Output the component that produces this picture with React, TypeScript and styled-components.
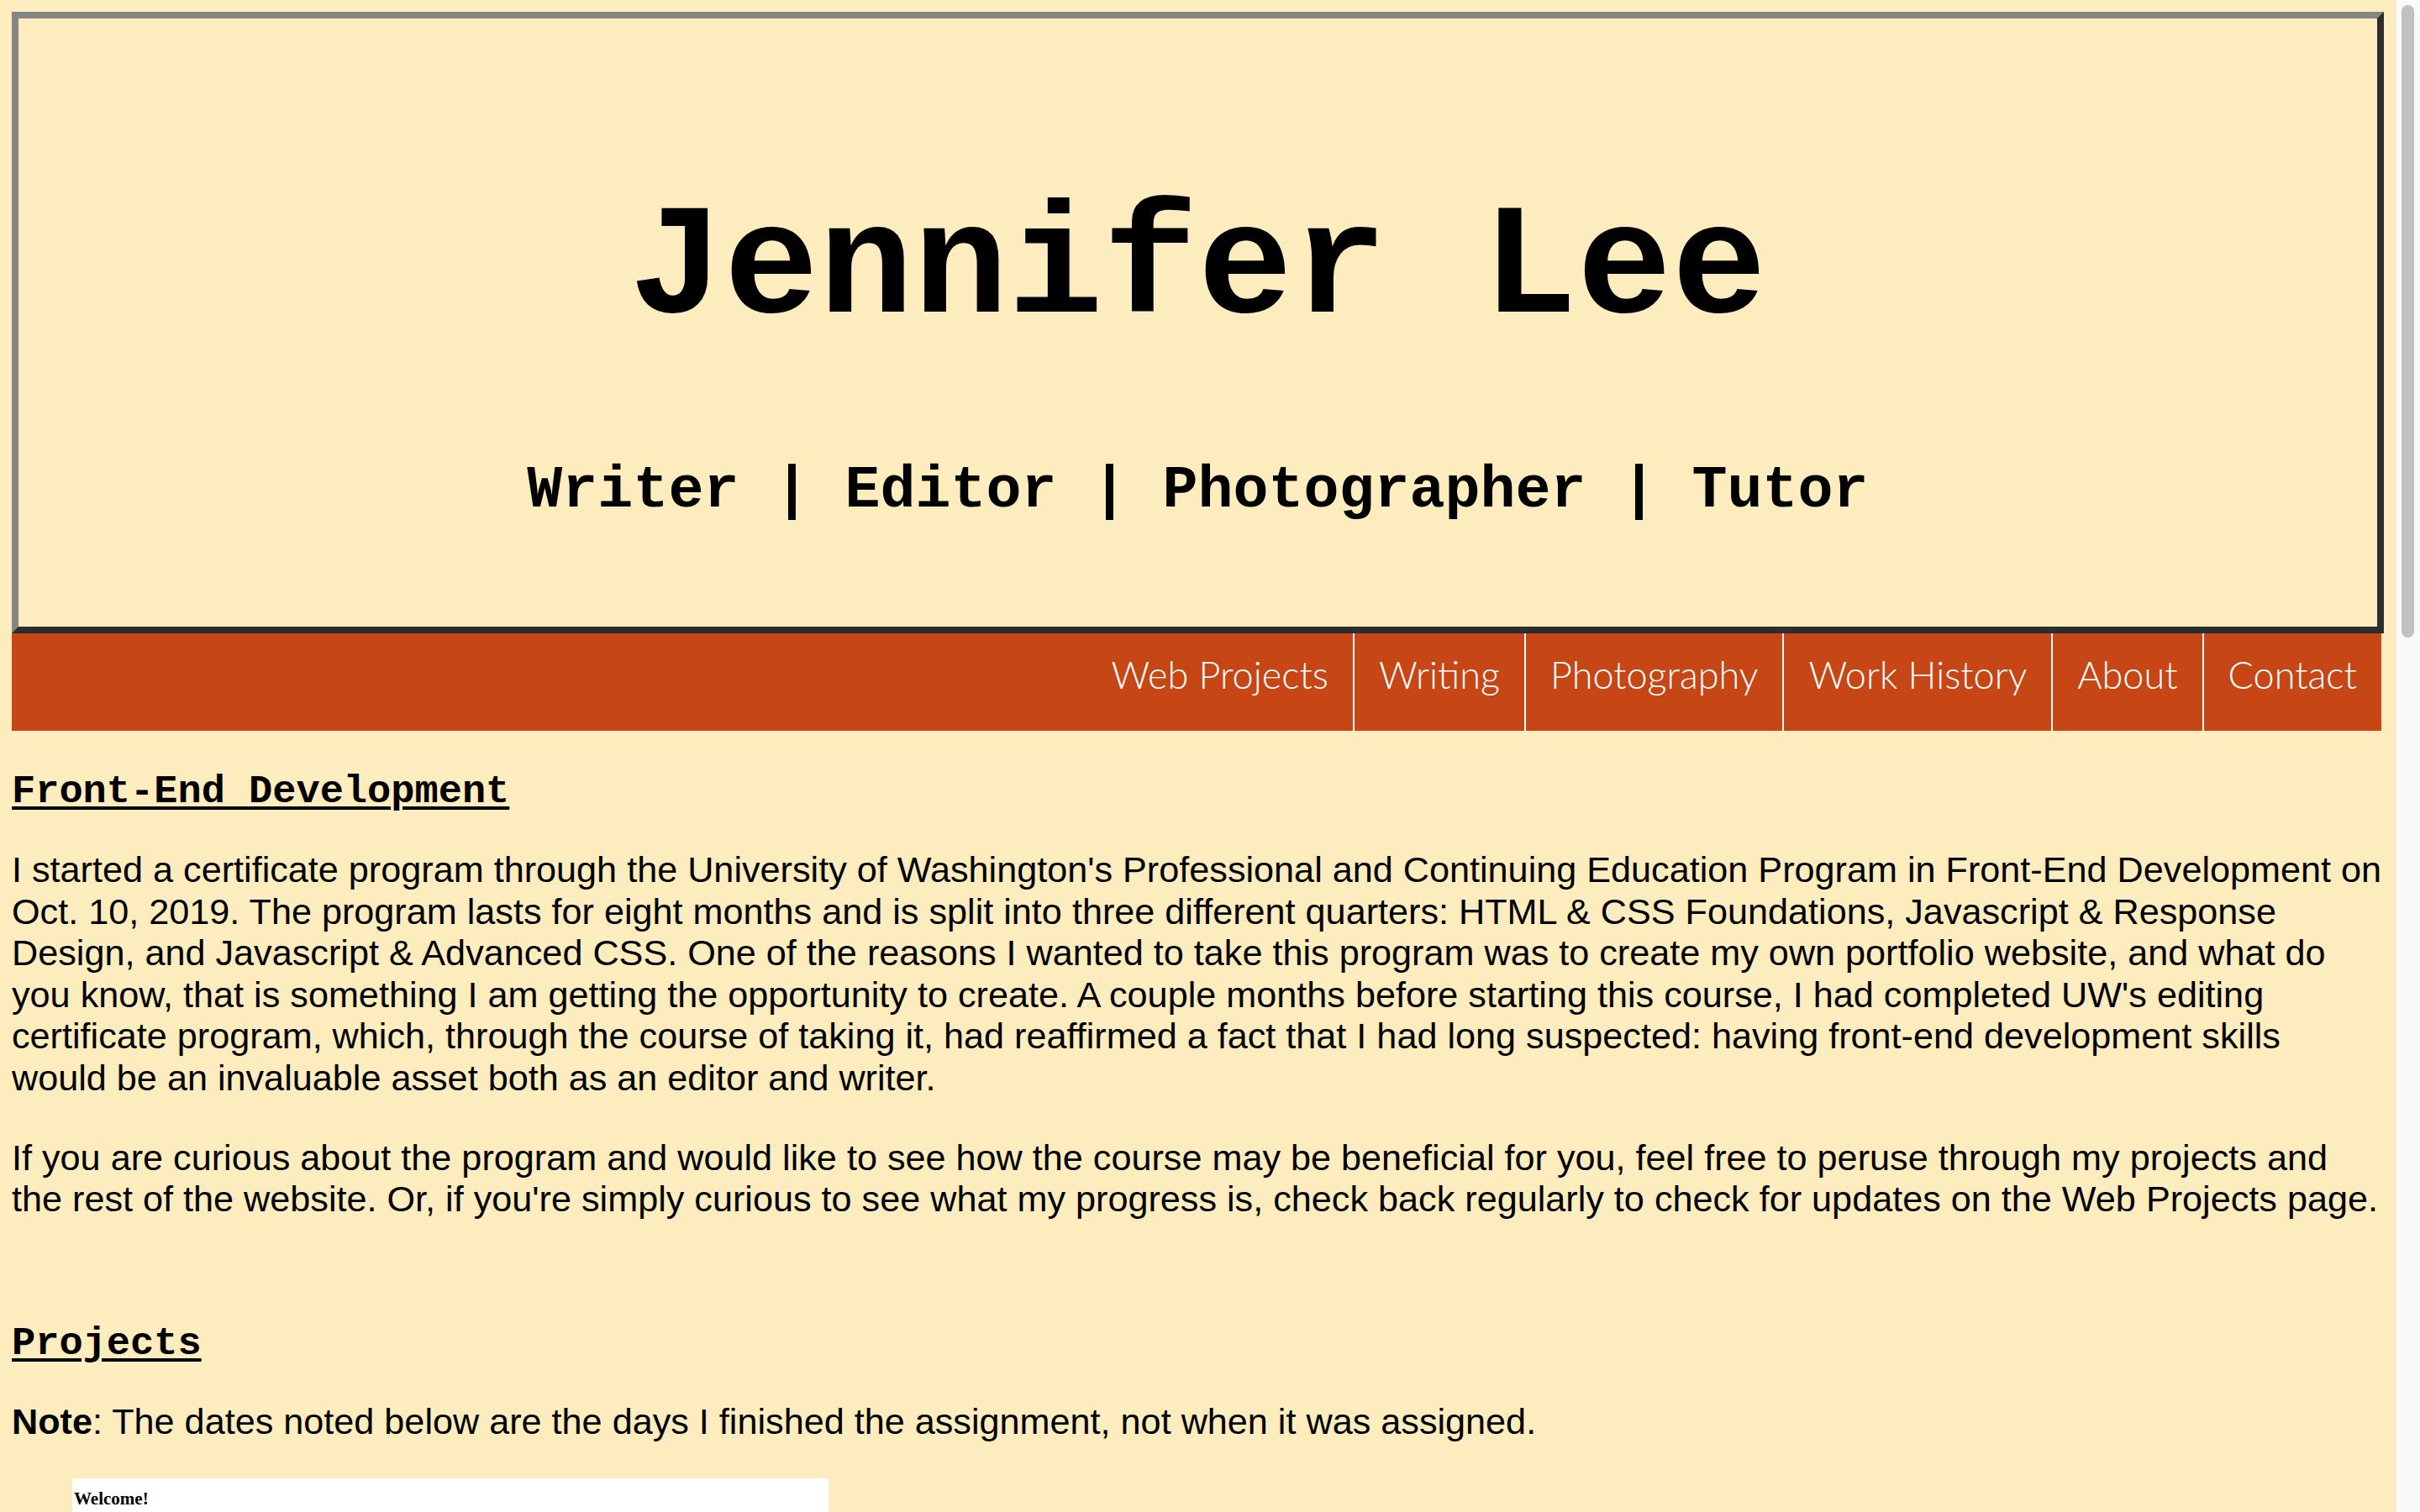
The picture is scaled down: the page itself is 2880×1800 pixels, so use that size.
import React from "react";
import styled, { createGlobalStyle } from "styled-components";

const cream = "#FDECBD";
const rust = "#C74616";

const GlobalStyle = createGlobalStyle`
  html, body {
    margin: 0;
    padding: 0;
    height: 100%;
    overflow: hidden;
    background: ${cream};
  }
  body {
    font-family: "Liberation Sans", Arial, sans-serif;
    color: #000;
  }
  * { box-sizing: border-box; }
`;

const Viewport = styled.div`
  display: flex;
  flex-direction: row;
  width: 100vw;
  height: 100vh;
  background: ${cream};
`;

const Page = styled.div`
  flex: 1;
  min-width: 0;
  height: 100%;
  overflow: hidden;
  padding: 14px 14px 0 14px;
`;

const ScrollTrack = styled.div`
  width: 29px;
  flex: none;
  height: 100%;
  background: #fafafa;
  border-left: 1px solid #e9e9e9;
  padding: 6px 0 0 6px;
`;

const ScrollThumb = styled.div`
  width: 15px;
  height: 753px;
  border-radius: 8px;
  background: #c1c1c1;
`;

const Header = styled.header`
  border-style: solid;
  border-width: 8px;
  border-color: #858585 #2d2d2d #2d2d2d #858585;
  padding: 205px 0 126px 0;
  display: flex;
  flex-direction: column;
  align-items: center;
  gap: 134px;
  text-align: center;
`;

const Title = styled.h1`
  margin: 0;
  font-family: "Liberation Mono", "Courier New", monospace;
  font-weight: 700;
  font-size: 188px;
  line-height: 188px;
  white-space: nowrap;
`;

const Subtitle = styled.h2`
  margin: 0;
  font-family: "Liberation Mono", "Courier New", monospace;
  font-weight: 700;
  font-size: 70px;
  line-height: 71px;
  white-space: pre;
`;

const Nav = styled.nav`
  display: flex;
  justify-content: flex-end;
  align-items: stretch;
  height: 116px;
  margin-right: 3px;
  background: ${rust};
`;

const NavItem = styled.a`
  display: flex;
  align-items: center;
  padding: 0 29px 18px 29px;
  color: #fff;
  text-decoration: none;
  font-family: Lato, "Open Sans", sans-serif;
  font-weight: 300;
  font-size: 45px;
  line-height: 1.2;
  white-space: nowrap;
  & + & {
    border-left: 2px solid #fff;
  }
`;

const Main = styled.main`
  display: flex;
  flex-direction: column;
  align-items: flex-start;
`;

const SectionHeading = styled.h2<{ $top: number }>`
  margin: ${(p) => p.$top}px 0 0 0;
  font-family: "Liberation Mono", "Courier New", monospace;
  font-weight: 700;
  font-size: 47px;
  line-height: 56px;
  text-decoration: underline;
  text-decoration-thickness: 4px;
  text-underline-offset: 5px;
`;

const Para = styled.p<{ $top: number }>`
  margin: ${(p) => p.$top}px 0 0 0;
  font-size: 43.2px;
  line-height: 49.6px;
`;

const ProjectFrame = styled.div`
  margin: 43px 0 0 72px;
  width: 900px;
  height: 600px;
  flex: none;
  background: #fff;
  padding: 12px 2px 0 2px;
`;

const FrameTitle = styled.h3`
  margin: 0;
  font-family: "Liberation Serif", "Times New Roman", serif;
  font-weight: 700;
  font-size: 21px;
  line-height: normal;
`;

const navLinks = ["Web Projects", "Writing", "Photography", "Work History", "About", "Contact"];

export default function App() {
  return (
    <>
      <GlobalStyle />
      <Viewport>
        <Page>
          <Header>
            <Title>Jennifer Lee</Title>
            <Subtitle>{"Writer | Editor | Photographer | Tutor"}</Subtitle>
          </Header>
          <Nav>
            {navLinks.map((l) => (
              <NavItem key={l} href="#">
                {l}
              </NavItem>
            ))}
          </Nav>
          <Main>
            <SectionHeading $top={45}>Front-End Development</SectionHeading>
            <Para $top={40}>
              I started a certificate program through the University of Washington's Professional and
              Continuing Education Program in Front-End Development on Oct. 10, 2019. The program lasts
              for eight months and is split into three different quarters: HTML &amp; CSS Foundations,
              Javascript &amp; Response Design, and Javascript &amp; Advanced CSS. One of the reasons I
              wanted to take this program was to create my own portfolio website, and what do you know,
              that is something I am getting the opportunity to create. A couple months before starting
              this course, I had completed UW's editing certificate program, which, through the course of
              taking it, had reaffirmed a fact that I had long suspected: having front-end development
              skills would be an invaluable asset both as an editor and writer.
            </Para>
            <Para $top={45}>
              If you are curious about the program and would like to see how the course may be beneficial
              for you, feel free to peruse through my projects and the rest of the website. Or, if you're
              simply curious to see what my progress is, check back regularly to check for updates on the
              Web Projects page.
            </Para>
            <SectionHeading $top={119}>Projects</SectionHeading>
            <Para $top={40}>
              <b>Note</b>: The dates noted below are the days I finished the assignment, not when it was
              assigned.
            </Para>
            <ProjectFrame>
              <FrameTitle>Welcome!</FrameTitle>
            </ProjectFrame>
          </Main>
        </Page>
        <ScrollTrack>
          <ScrollThumb />
        </ScrollTrack>
      </Viewport>
    </>
  );
}
